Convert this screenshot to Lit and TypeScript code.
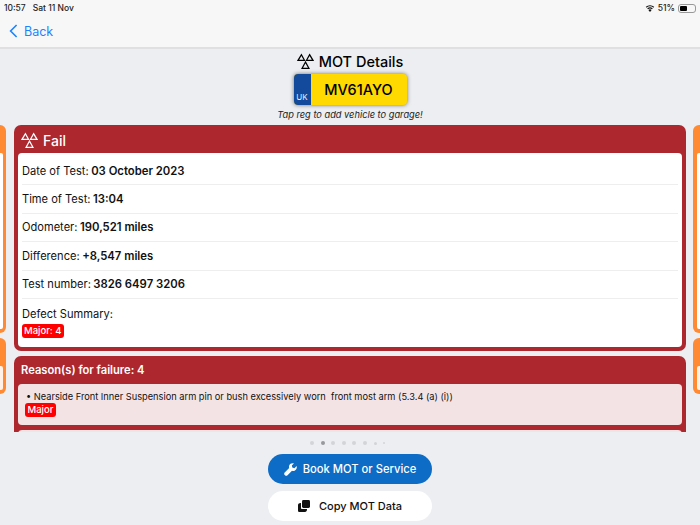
import { LitElement, html, css } from 'lit';
import { customElement } from 'lit/decorators.js';

// three triangle MOT logo
const motIcon = (size: number) => html`
  <svg class="mot" width=${size} height=${size} viewBox="0 0 20 20" fill="none" stroke="currentColor" stroke-width="1.5" stroke-linejoin="miter">
    <path d="M5.2 2 L8.8 8.6 H1.2 Z"></path>
    <path d="M14.8 2 L18.8 8.6 H11.2 Z"></path>
    <path d="M10 10.6 L14 18 H6 Z"></path>
  </svg>`;

const rows = [
  ['Date of Test:', '03 October 2023'],
  ['Time of Test:', '13:04'],
  ['Odometer:', '190,521 miles'],
  ['Difference:', '+8,547 miles'],
  ['Test number:', '3826 6497 3206'],
];

@customElement('app-root')
export class AppRoot extends LitElement {
  static styles = css`
    :host {
      display: block;
      width: 700px;
      height: 525px;
      overflow: hidden;
      background: #eceef1;
      color: #000;
      font-family: Inter, 'Liberation Sans', sans-serif;
    }
    .top {
      height: 47px;
      background: #f7f7f7;
      border-bottom: 2px solid #e0e0e2;
    }
    .status {
      height: 20px;
      display: flex;
      align-items: flex-start;
      padding: 2.5px 4px 0 4px;
      box-sizing: border-box;
      font-size: 8.5px;
      line-height: 11px;
      font-weight: 500;
      color: #222;
      gap: 7px;
    }
    .status .right {
      margin-left: auto;
      display: flex;
      align-items: center;
      gap: 3px;
      height: 11px;
    }
    .battery {
      width: 18px;
      height: 9px;
      box-sizing: border-box;
      border: 1px solid #999;
      border-radius: 3px;
      padding: 1px;
      display: flex;
    }
    .battery i {
      width: 7px;
      background: #000;
      border-radius: 1px;
    }
    .back {
      height: 22px;
      display: flex;
      align-items: center;
      gap: 6px;
      padding-left: 9px;
      color: #1a84ff;
      font-size: 12.5px;
    }
    .head {
      display: flex;
      flex-direction: column;
      align-items: center;
      height: 76px;
    }
    .title {
      margin-top: 1px;
      height: 22px;
      display: flex;
      align-items: center;
      gap: 5px;
      font-size: 14.5px;
      font-weight: 500;
    }
    .plate {
      margin-top: 2px;
      width: 113px;
      height: 31px;
      display: flex;
      border-radius: 4px;
      overflow: hidden;
      box-shadow: 0 0 4px rgba(0, 0, 0, 0.55);
      background: #ffd900;
    }
    .plate .uk {
      width: 17px;
      background: #134a9b;
      color: #e8eefc;
      font-size: 8px;
      display: flex;
      align-items: flex-end;
      justify-content: center;
      padding-bottom: 3px;
      box-sizing: border-box;
    }
    .plate .reg {
      flex: 1;
      display: flex;
      align-items: center;
      justify-content: center;
      font-size: 14.5px;
      font-weight: 500;
    }
    .hint {
      margin-top: 4px;
      font-size: 9.25px;
      font-style: italic;
      color: #222;
    }
    .carousel {
      display: flex;
      height: 307px;
      overflow: hidden;
    }
    .peek {
      flex: none;
      display: flex;
      flex-direction: column;
      gap: 5px;
      overflow: hidden;
    }
    .peek.left {
      width: 6px;
      align-items: flex-end;
    }
    .peek.right {
      width: 7px;
      align-items: flex-start;
    }
    .stub {
      width: 24px;
      flex: none;
      background: #ff8a33;
      border-radius: 6px;
      padding: 28px 3.5px 4px;
      box-sizing: border-box;
      display: flex;
    }
    .stub i {
      flex: 1;
      background: #fff;
      border-radius: 2px;
    }
    .stub.a {
      height: 208px;
    }
    .stub.b {
      height: 56px;
    }
    .stub.b i {
      background: #fff1e7;
    }
    .main {
      width: 672px;
      flex: none;
      margin: 0 7px 0 8px;
      display: flex;
      flex-direction: column;
      gap: 5px;
    }
    .card {
      flex: none;
      background: #ad272e;
      border-radius: 7px;
      padding: 0 4px 4px 3.5px;
      box-sizing: border-box;
    }
    .fail {
      height: 226px;
    }
    .fail .bar {
      height: 28px;
      display: flex;
      align-items: center;
      gap: 5px;
      color: #fff;
      font-size: 14px;
      font-weight: 500;
      padding: 3px 0 0 3.5px;
      box-sizing: border-box;
    }
    .panel {
      background: #fff;
      border-radius: 4px;
      height: 194px;
      padding: 4px 4px 0 4.5px;
      box-sizing: border-box;
    }
    .row {
      height: 28.4px;
      display: flex;
      align-items: center;
      gap: 2.5px;
      font-size: 11.1px;
      border-bottom: 1px solid #eeeeef;
      box-sizing: border-box;
      color: #111;
    }
    .row b {
      font-size: 11.3px;
      font-weight: 600;
    }
    .summary {
      padding-top: 8px;
      font-size: 11.1px;
      color: #111;
    }
    .tag {
      display: inline-block;
      background: #fe0000;
      color: #fff;
      font-size: 9.5px;
      font-weight: 500;
      line-height: 14px;
      border-radius: 3px;
      padding: 0 2px;
    }
    .summary .tag {
      margin-top: 3px;
      display: block;
      width: fit-content;
    }
    .reasons {
      height: 100px;
    }
    .reasons .bar {
      height: 28px;
      display: flex;
      align-items: center;
      color: #fff;
      font-size: 11.2px;
      font-weight: 600;
      padding-left: 3.5px;
    }
    .defect {
      height: 41px;
      background: #f4e3e4;
      border-radius: 4px;
      padding: 7px 8.5px 0;
      box-sizing: border-box;
      font-size: 9.26px;
      color: #111;
    }
    .defect .tag {
      display: block;
      width: fit-content;
      margin: 1px 0 0 -1px;
      padding: 0 2.5px;
    }
    .next {
      height: 30px;
      margin-top: 5px;
      background: #f4e3e4;
      border-radius: 4px;
    }
    .dots {
      height: 22px;
      display: flex;
      align-items: center;
      padding-left: 310px;
      gap: 6.6px;
    }
    .dots i {
      width: 4px;
      height: 4px;
      border-radius: 50%;
      background: #d3d4d7;
    }
    .dots i.on {
      background: #98999c;
    }
    .dots i.sm {
      width: 3px;
      height: 3px;
    }
    .dots i.xs {
      width: 2px;
      height: 2px;
    }
    .actions {
      display: flex;
      flex-direction: column;
      align-items: center;
      gap: 7px;
    }
    .btn {
      width: 164px;
      height: 30px;
      border-radius: 15px;
      display: flex;
      align-items: center;
      justify-content: center;
      font-size: 11px;
      font-weight: 500;
    }
    .btn.blue {
      background: #0c6cc6;
      color: #fff;
      gap: 6px;
      font-size: 11.2px;
    }
    .btn.white {
      background: #fff;
      color: #111;
      gap: 9px;
    }
  `;

  render() {
    return html`
      <div class="top">
        <div class="status">
          <span>10:57</span><span>Sat 11 Nov</span>
          <span class="right">
            <svg width="10" height="8" viewBox="0 0 10 8">
              <path d="M5 8 L3.4 6 A2.5 2.5 0 0 1 6.6 6 Z" fill="#111"></path>
              <path d="M2.6 4.9 A3.8 3.8 0 0 1 7.4 4.9 M1.2 3.2 A5.8 5.8 0 0 1 8.8 3.2" fill="none" stroke="#111" stroke-width="1.2"></path>
            </svg>
            <span>51%</span>
            <span class="battery"><i></i></span>
          </span>
        </div>
        <div class="back">
          <svg width="9" height="14" viewBox="0 0 9 14" fill="none" stroke="#1a84ff" stroke-width="1.6">
            <path d="M7.6 1 L1.6 7 L7.6 13"></path>
          </svg>
          <span>Back</span>
        </div>
      </div>
      <div class="head">
        <div class="title">${motIcon(17)}<span>MOT Details</span></div>
        <div class="plate">
          <div class="uk">UK</div>
          <div class="reg">MV61AYO</div>
        </div>
        <div class="hint">Tap reg to add vehicle to garage!</div>
      </div>
      <div class="carousel">
        <div class="peek left">
          <div class="stub a"><i></i></div>
          <div class="stub b"><i></i></div>
        </div>
        <div class="main">
          <div class="card fail">
            <div class="bar">${motIcon(17)}<span>Fail</span></div>
            <div class="panel">
              ${rows.map((r) => html`<div class="row"><span>${r[0]}</span><b>${r[1]}</b></div>`)}
              <div class="summary">
                <div>Defect Summary:</div>
                <span class="tag">Major: 4</span>
              </div>
            </div>
          </div>
          <div class="card reasons">
            <div class="bar">Reason(s) for failure: 4</div>
            <div class="defect">
              <div>• Nearside Front Inner Suspension arm pin or bush excessively worn&nbsp; front most arm (5.3.4 (a) (i))</div>
              <span class="tag">Major</span>
            </div>
            <div class="next"></div>
          </div>
        </div>
        <div class="peek right">
          <div class="stub a"><i></i></div>
          <div class="stub b"><i></i></div>
        </div>
      </div>
      <div class="dots">
        <i></i><i class="on"></i><i></i><i></i><i></i><i></i><i class="sm"></i><i class="xs"></i>
      </div>
      <div class="actions">
        <div class="btn blue">
          <svg width="13" height="13" viewBox="0 0 13 13" fill="#fff">
            <path d="M12.6 3.1 L10.4 5.2 L8.3 4.6 L7.8 2.6 L9.9 .4 C8 -.2 5.9 .6 5.2 2.4 C4.9 3.3 4.9 4.2 5.2 5 L.7 9.5 C0 10.2 0 11.3 .7 12 L1 12.3 C1.7 13 2.8 13 3.5 12.3 L8 7.8 C8.8 8.1 9.7 8.1 10.6 7.8 C12.4 7.1 13.2 5 12.6 3.1 Z"></path>
          </svg>
          <span>Book MOT or Service</span>
        </div>
        <div class="btn white">
          <svg width="12" height="12" viewBox="0 0 12 12" fill="#111">
            <rect x="4" y="0" width="8" height="8" rx="1.4"></rect>
            <path d="M2.6 3 H3 V8.2 C3 8.6 3.4 9 3.8 9 H9 V9.6 C9 10.9 8.2 12 7 12 H1.6 C.7 12 0 11.3 0 10.4 V5 C0 3.8 1.2 3 2.6 3 Z"></path>
          </svg>
          <span>Copy MOT Data</span>
        </div>
      </div>
    `;
  }
}
